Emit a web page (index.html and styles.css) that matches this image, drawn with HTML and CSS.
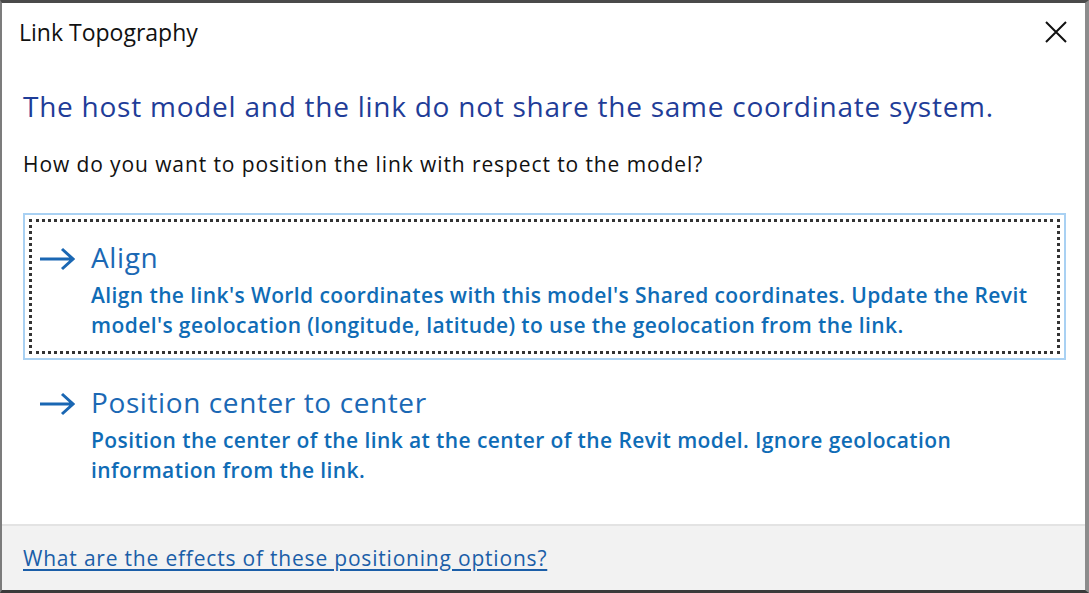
FILE: index.html
```html
<!DOCTYPE html>
<html>
<head>
<meta charset="utf-8">
<link rel="stylesheet" href="styles.css">
</head>
<body>
<div class="dialog">
  <div class="titlebar">
    <span class="title">Link Topography</span>
    <svg class="close" width="22" height="22" viewBox="0 0 22 22"><path d="M1 1 L21 21 M21 1 L1 21" stroke="#111" stroke-width="2" fill="none"/></svg>
  </div>
  <div class="content">
    <h1 class="heading">The host model and the link do not share the same coordinate system.</h1>
    <p class="question">How do you want to position the link with respect to the model?</p>
    <div class="option focused">
      <div class="focus">
        <svg class="arrow" width="36" height="24" viewBox="0 0 36 24"><path d="M1 12 H34 M23 2 L34 12 L23 22" stroke="#1a67b3" stroke-width="3" fill="none"/></svg>
        <div class="opt-text">
          <div class="opt-title">Align</div>
          <div class="opt-desc">Align the link's World coordinates with this model's Shared coordinates. Update the Revit model's geolocation (longitude, latitude) to use the geolocation from the link.</div>
        </div>
      </div>
    </div>
    <div class="option">
      <div class="focus">
        <svg class="arrow" width="36" height="24" viewBox="0 0 36 24"><path d="M1 12 H34 M23 2 L34 12 L23 22" stroke="#1a67b3" stroke-width="3" fill="none"/></svg>
        <div class="opt-text">
          <div class="opt-title">Position center to center</div>
          <div class="opt-desc">Position the center of the link at the center of the Revit model. Ignore geolocation information from the link.</div>
        </div>
      </div>
    </div>
  </div>
  <div class="footer">
    <a class="help" href="#">What are the effects of these positioning options?</a>
  </div>
</div>
</body>
</html>
```
FILE: styles.css
```css
html, body {
  margin: 0;
  padding: 0;
  background: #3c3c3c;
  font-family: "Open Sans", "Noto Sans", sans-serif;
}
.dialog {
  box-sizing: border-box;
  width: 1089px;
  height: 593px;
  background: #fff;
  border-top: 3px solid #4a4a4a;
  border-left: 2px solid #7c7c7c;
  border-right: 4px solid #8c8c8c;
  border-bottom: 3px solid #3a3a3a;
  display: flex;
  flex-direction: column;
}
.titlebar {
  height: 62px;
  box-sizing: border-box;
  display: flex;
  align-items: flex-start;
  justify-content: space-between;
  padding: 14px 18px 0 17px;
  flex: none;
}
.title {
  font-size: 23px;
  line-height: 31px;
  color: #111;
}
.close {
  margin-top: 4px;
}
.content {
  flex: 1;
  padding: 0 19px 0 21px;
}
.heading {
  margin: 22px 0 0 0;
  font-weight: 400;
  font-size: 28px;
  line-height: 38px;
  color: #1f3d98;
  letter-spacing: 0.75px;
}
.question {
  margin: 26px 0 0 0;
  font-size: 21px;
  line-height: 26px;
  color: #111;
  letter-spacing: 0.9px;
}
.option {
  margin: 36px 0 0 0;
  border: 2px solid transparent;
  padding: 4px;
}
.option.focused {
  border-color: #a9d1f3;
}
.focus {
  border: 3px dotted transparent;
  display: flex;
  align-items: flex-start;
  padding: 17px 10px 11px 7px;
}
.option.focused .focus {
  border-color: #333;
}
.option + .option {
  margin-top: -2px;
}
.arrow {
  flex: none;
  margin-top: 8px;
}
.opt-text {
  margin-left: 16px;
}
.opt-title {
  font-size: 28px;
  line-height: 36px;
  color: #1b68b4;
  letter-spacing: 0.6px;
  margin-bottom: 5px;
}
.opt-desc {
  font-size: 21px;
  font-weight: 600;
  line-height: 30px;
  color: #0f6cb6;
  letter-spacing: 0.4px;
}
.footer {
  flex: none;
  height: 66px;
  box-sizing: border-box;
  background: #f2f2f2;
  border-top: 2px solid #e3e3e3;
  display: flex;
  align-items: center;
  padding-left: 21px;
}
.help {
  font-size: 21px;
  color: #1b5ea8;
  letter-spacing: 0.8px;
  text-decoration: underline;
  text-underline-offset: 3px;
}
```
